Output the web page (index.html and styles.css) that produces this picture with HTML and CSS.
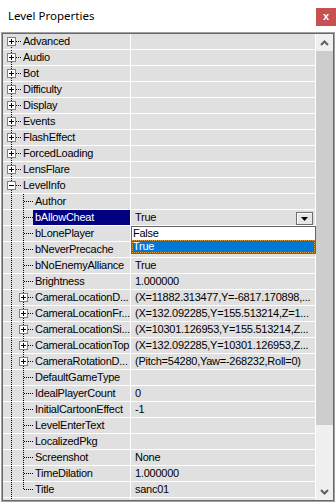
FILE: index.html
```html
<!DOCTYPE html>
<html>
<head>
<meta charset="utf-8">
<link rel="stylesheet" href="styles.css">
</head>
<body>
<div class="titlebar">
  <span class="title">Level Properties</span>
  <span class="close">x</span>
</div>
<div class="frame">
  <div class="grid">
    <div class="rows">
      <div class="row"><div class="name"><span class="g g-top first"><span class="bx"></span></span><span class="lb">Advanced</span></div><div class="val"></div></div>
      <div class="row"><div class="name"><span class="g g-top"><span class="bx"></span></span><span class="lb">Audio</span></div><div class="val"></div></div>
      <div class="row"><div class="name"><span class="g g-top"><span class="bx"></span></span><span class="lb">Bot</span></div><div class="val"></div></div>
      <div class="row"><div class="name"><span class="g g-top"><span class="bx"></span></span><span class="lb">Difficulty</span></div><div class="val"></div></div>
      <div class="row"><div class="name"><span class="g g-top"><span class="bx"></span></span><span class="lb">Display</span></div><div class="val"></div></div>
      <div class="row"><div class="name"><span class="g g-top"><span class="bx"></span></span><span class="lb">Events</span></div><div class="val"></div></div>
      <div class="row"><div class="name"><span class="g g-top"><span class="bx"></span></span><span class="lb">FlashEffect</span></div><div class="val"></div></div>
      <div class="row"><div class="name"><span class="g g-top"><span class="bx"></span></span><span class="lb">ForcedLoading</span></div><div class="val"></div></div>
      <div class="row"><div class="name"><span class="g g-top"><span class="bx"></span></span><span class="lb">LensFlare</span></div><div class="val"></div></div>
      <div class="row"><div class="name"><span class="g g-top"><span class="bx minus"></span></span><span class="lb">LevelInfo</span></div><div class="val"></div></div>
      <div class="row"><div class="name"><span class="g g-child"></span><span class="lb">Author</span></div><div class="val"></div></div>
      <div class="row sel"><div class="name"><span class="g g-child"></span><span class="lb">bAllowCheat</span></div><div class="val edit"><span class="vt">True</span><span class="ddbtn"><svg width="7" height="4" viewBox="0 0 7 4"><path d="M0 0H7L3.5 4Z" fill="#000"/></svg></span>
        <div class="droplist">
          <div class="opt">False</div>
          <div class="opt on">True</div>
        </div>
      </div></div>
      <div class="row"><div class="name"><span class="g g-child"></span><span class="lb">bLonePlayer</span></div><div class="val"></div></div>
      <div class="row"><div class="name"><span class="g g-child"></span><span class="lb">bNeverPrecache</span></div><div class="val"></div></div>
      <div class="row"><div class="name"><span class="g g-child"></span><span class="lb">bNoEnemyAlliance</span></div><div class="val">True</div></div>
      <div class="row"><div class="name"><span class="g g-child"></span><span class="lb">Brightness</span></div><div class="val">1.000000</div></div>
      <div class="row"><div class="name"><span class="g g-child"><span class="bx cbx"></span></span><span class="lb">CameraLocationD...</span></div><div class="val">(X=11882.313477,Y=-6817.170898,...</div></div>
      <div class="row"><div class="name"><span class="g g-child"><span class="bx cbx"></span></span><span class="lb">CameraLocationFr...</span></div><div class="val">(X=132.092285,Y=155.513214,Z=1...</div></div>
      <div class="row"><div class="name"><span class="g g-child"><span class="bx cbx"></span></span><span class="lb">CameraLocationSi...</span></div><div class="val">(X=10301.126953,Y=155.513214,Z...</div></div>
      <div class="row"><div class="name"><span class="g g-child"><span class="bx cbx"></span></span><span class="lb">CameraLocationTop</span></div><div class="val">(X=132.092285,Y=10301.126953,Z...</div></div>
      <div class="row"><div class="name"><span class="g g-child"><span class="bx cbx"></span></span><span class="lb">CameraRotationD...</span></div><div class="val">(Pitch=54280,Yaw=-268232,Roll=0)</div></div>
      <div class="row"><div class="name"><span class="g g-child"></span><span class="lb">DefaultGameType</span></div><div class="val"></div></div>
      <div class="row"><div class="name"><span class="g g-child"></span><span class="lb">IdealPlayerCount</span></div><div class="val">0</div></div>
      <div class="row"><div class="name"><span class="g g-child"></span><span class="lb">InitialCartoonEffect</span></div><div class="val">-1</div></div>
      <div class="row"><div class="name"><span class="g g-child"></span><span class="lb">LevelEnterText</span></div><div class="val"></div></div>
      <div class="row"><div class="name"><span class="g g-child"></span><span class="lb">LocalizedPkg</span></div><div class="val"></div></div>
      <div class="row"><div class="name"><span class="g g-child"></span><span class="lb">Screenshot</span></div><div class="val">None</div></div>
      <div class="row"><div class="name"><span class="g g-child"></span><span class="lb">TimeDilation</span></div><div class="val">1.000000</div></div>
      <div class="row"><div class="name"><span class="g g-child last"></span><span class="lb">Title</span></div><div class="val">sanc01</div></div>
      <div class="row"><div class="name"><span class="g g-top"></span><span class="lb"></span></div><div class="val"></div></div>
    </div>
    <div class="sb">
      <div class="sb-btn"><svg width="9" height="6" viewBox="0 0 9 6"><polyline points="1,5 4.5,1.5 8,5" fill="none" stroke="#606060" stroke-width="2"/></svg></div>
      <div class="sb-thumb"></div>
      <div class="sb-track"></div>
      <div class="sb-btn"><svg width="9" height="6" viewBox="0 0 9 6"><polyline points="1,1 4.5,4.5 8,1" fill="none" stroke="#606060" stroke-width="2"/></svg></div>
    </div>
  </div>
</div>
</body>
</html>
```
FILE: styles.css
```css
html, body {
  margin: 0;
  padding: 0;
  background: #fff;
}
body {
  width: 336px;
  height: 504px;
  overflow: hidden;
  font-family: "Liberation Sans", Arial, sans-serif;
}
.titlebar {
  height: 32px;
  display: flex;
  justify-content: space-between;
  align-items: flex-start;
  background: #fff;
}
.title {
  font-family: "Noto Sans", "Liberation Sans", sans-serif;
  font-size: 11.5px;
  line-height: 16px;
  color: #000;
  margin: 8px 0 0 8px;
}
.close {
  margin-top: 8px;
  width: 20px;
  height: 18px;
  background: #c75050;
  color: #fff;
  font: bold 11px/17px "Liberation Sans", sans-serif;
  text-align: center;
}
.frame {
  margin: 0 1px;
  height: 470px;
  box-sizing: border-box;
  border: 1px solid #a0a0a0;
}
.grid {
  height: 100%;
  box-sizing: border-box;
  border: 1px solid #696969;
  display: flex;
}
.rows {
  flex: 1;
  overflow: hidden;
  background: #e0e0e0;
  font-size: 11px;
  letter-spacing: -0.25px;
  color: #000;
}
.row {
  display: flex;
  height: 16px;
  box-sizing: border-box;
  border-bottom: 1px solid #fff;
  line-height: 15px;
}
.name {
  width: 128px;
  flex: none;
  box-sizing: border-box;
  border-right: 1px solid #fff;
  display: flex;
}
.lb {
  flex: 1;
  min-width: 0;
  padding-left: 2px;
  white-space: nowrap;
  overflow: hidden;
}
.sel .lb {
  background: #000080;
  color: #fff;
}
.val {
  flex: 1;
  min-width: 0;
  box-sizing: border-box;
  padding-left: 4px;
  border-right: 1px solid #fff;
  white-space: nowrap;
  overflow: hidden;
}
.val.edit {
  display: flex;
  align-items: flex-start;
  position: relative;
  overflow: visible;
}
.vt { flex: 1; }
.ddbtn {
  width: 17px;
  height: 13px;
  margin: 2px 2px 0 0;
  box-sizing: border-box;
  border: 1px solid #6e6e6e;
  box-shadow: inset 1px 1px 0 #fff;
  background: #e6e6e6;
  display: flex;
  align-items: center;
  justify-content: center;
}
.droplist {
  position: absolute;
  left: 0;
  top: 16px;
  width: 185px;
  box-sizing: border-box;
  border: 1px solid #646464;
  background: #fff;
  z-index: 2;
}
.opt {
  height: 13px;
  line-height: 13px;
  padding-left: 1px;
  box-sizing: border-box;
}
.opt.on {
  background: #0078d7;
  color: #fff;
  outline: 1px dotted #e0a040;
  outline-offset: -1px;
}
.g {
  flex: none;
  height: 15px;
  position: relative;
}
.g-top {
  width: 18px;
  background:
    repeating-linear-gradient(90deg, #000 0 1px, transparent 1px 2px) 13px 7px / 6px 1px no-repeat,
    repeating-linear-gradient(#000 0 1px, transparent 1px 2px) 8px 0 / 1px 100% no-repeat;
}
.g-top.first {
  background:
    repeating-linear-gradient(90deg, #000 0 1px, transparent 1px 2px) 13px 7px / 6px 1px no-repeat,
    repeating-linear-gradient(#000 0 1px, transparent 1px 2px) 8px 7px / 1px 8px no-repeat;
}
.g-child {
  width: 30px;
  background:
    repeating-linear-gradient(90deg, #000 0 1px, transparent 1px 2px) 21px 7px / 9px 1px no-repeat,
    repeating-linear-gradient(#000 0 1px, transparent 1px 2px) 20px 0 / 1px 100% no-repeat,
    repeating-linear-gradient(#000 0 1px, transparent 1px 2px) 8px 0 / 1px 100% no-repeat;
}
.g-child.last {
  background:
    repeating-linear-gradient(90deg, #000 0 1px, transparent 1px 2px) 21px 7px / 9px 1px no-repeat,
    repeating-linear-gradient(#000 0 1px, transparent 1px 2px) 20px 0 / 1px 8px no-repeat,
    repeating-linear-gradient(#000 0 1px, transparent 1px 2px) 8px 0 / 1px 100% no-repeat;
}
.bx {
  position: absolute;
  left: 4px;
  top: 3px;
  width: 9px;
  height: 9px;
  box-sizing: border-box;
  border: 1px solid #808080;
  background:
    linear-gradient(#000, #000) 1px 3px / 5px 1px no-repeat,
    linear-gradient(#000, #000) 3px 1px / 1px 5px no-repeat,
    #fff;
}
.bx.minus {
  background:
    linear-gradient(#000, #000) 1px 3px / 5px 1px no-repeat,
    #fff;
}
.bx.cbx { left: 16px; }
.sb {
  width: 17px;
  flex: none;
  display: flex;
  flex-direction: column;
  background: #f0f0f0;
}
.sb-btn {
  height: 17px;
  flex: none;
  display: flex;
  align-items: center;
  justify-content: center;
  background: #f0f0f0;
}
.sb-thumb {
  height: 374px;
  flex: none;
  background: #cdcdcd;
}
.sb-track { flex: 1; }
```
